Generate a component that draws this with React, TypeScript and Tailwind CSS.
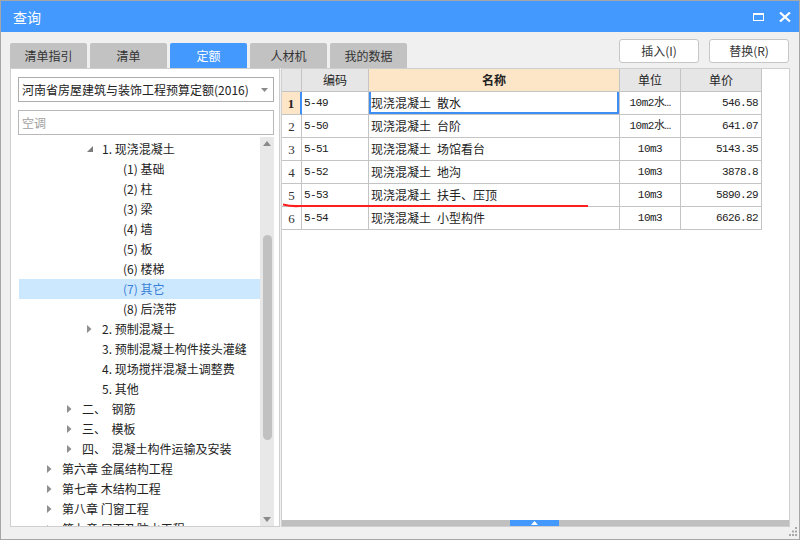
import React from "react";

type Node = { lv: 1 | 2 | 3 | 4; label: string; exp?: "open" | "closed"; sel?: boolean };

const tree: Node[] = [
  { lv: 3, exp: "open", label: "1. 现浇混凝土" },
  { lv: 4, label: "(1) 基础" },
  { lv: 4, label: "(2) 柱" },
  { lv: 4, label: "(3) 梁" },
  { lv: 4, label: "(4) 墙" },
  { lv: 4, label: "(5) 板" },
  { lv: 4, label: "(6) 楼梯" },
  { lv: 4, label: "(7) 其它", sel: true },
  { lv: 4, label: "(8) 后浇带" },
  { lv: 3, exp: "closed", label: "2. 预制混凝土" },
  { lv: 3, label: "3. 预制混凝土构件接头灌缝" },
  { lv: 3, label: "4. 现场搅拌混凝土调整费" },
  { lv: 3, label: "5. 其他" },
  { lv: 2, exp: "closed", label: "二、  钢筋" },
  { lv: 2, exp: "closed", label: "三、  模板" },
  { lv: 2, exp: "closed", label: "四、  混凝土构件运输及安装" },
  { lv: 1, exp: "closed", label: "第六章 金属结构工程" },
  { lv: 1, exp: "closed", label: "第七章 木结构工程" },
  { lv: 1, exp: "closed", label: "第八章 门窗工程" },
  { lv: 1, exp: "closed", label: "第九章 屋面及防水工程" },
];

const indent = { 1: "pl-[28px]", 2: "pl-[48px]", 3: "pl-[68px]", 4: "pl-[89px]" };

const rows = [
  { code: "5-49", a: "现浇混凝土", b: "散水", unit: "10m2水…", price: "546.58" },
  { code: "5-50", a: "现浇混凝土", b: "台阶", unit: "10m2水…", price: "641.07" },
  { code: "5-51", a: "现浇混凝土", b: "场馆看台", unit: "10m3", price: "5143.35" },
  { code: "5-52", a: "现浇混凝土", b: "地沟", unit: "10m3", price: "3878.8" },
  { code: "5-53", a: "现浇混凝土", b: "扶手、压顶", unit: "10m3", price: "5890.29" },
  { code: "5-54", a: "现浇混凝土", b: "小型构件", unit: "10m3", price: "6626.82" },
];

const tabs = ["清单指引", "清单", "定额", "人材机", "我的数据"];

function Arrow({ exp }: { exp?: "open" | "closed" }) {
  if (exp === "open")
    return (
      <svg width="6" height="6" className="mb-[1px]">
        <polygon points="6,0 6,6 0,6" fill="#7c7c7c" />
      </svg>
    );
  if (exp === "closed")
    return (
      <svg width="5" height="8">
        <polygon points="0,0 4.5,4 0,8" fill="#8f8f8f" />
      </svg>
    );
  return null;
}

export default function App() {
  return (
    <div className="w-[800px] h-[540px] border border-[#a6a6a6] bg-[#f0f0f0] flex flex-col font-['Noto_Sans_CJK_SC',sans-serif] text-[12px] text-[#222] overflow-hidden">
      {/* title bar */}
      <div className="h-[31px] shrink-0 bg-[#4499ff] flex items-center pl-[12px] pr-[8px] text-white">
        <span className="text-[14px] leading-none">查询</span>
        <div className="ml-auto flex items-center gap-[15px]">
          <div className="w-[11px] h-[8px] border-white border-[1.5px] border-t-[2.5px]" />
          <svg width="12" height="10" viewBox="0 0 12 10">
            <path d="M1 0.5 L11 9.5 M11 0.5 L1 9.5" stroke="white" strokeWidth="2.2" />
          </svg>
        </div>
      </div>

      <div className="relative flex-1 min-h-0 flex flex-col px-[9px] pb-[12px]">
        {/* tabs + buttons */}
        <div className="h-[36px] shrink-0 flex items-end">
          <div className="flex gap-[3px]">
            {tabs.map((t) => (
              <div
                key={t}
                className={
                  t === "定额"
                    ? "w-[77px] h-[25px] rounded-t-[2px] bg-[#4499ff] text-white flex items-center justify-center leading-none"
                    : "w-[77px] h-[25px] rounded-t-[2px] bg-[#c2c2c2] text-[#333] flex items-center justify-center leading-none"
                }
              >
                {t}
              </div>
            ))}
          </div>
          <div className="ml-auto flex gap-[10px] mb-[5px] mr-[1px]">
            <button className="w-[80px] h-[24px] border border-[#c6c6c6] rounded-[3px] bg-white text-[#333] leading-none">
              插入(I)
            </button>
            <button className="w-[80px] h-[24px] border border-[#c6c6c6] rounded-[3px] bg-white text-[#333] leading-none">
              替换(R)
            </button>
          </div>
        </div>

        {/* main */}
        <div className="flex-1 flex gap-[1px] min-h-0">
          {/* left panel */}
          <div className="w-[270px] bg-white border border-[#cfcfcf] flex flex-col pl-[7px] pr-[5px] pt-[8px] min-h-0">
            <div className="h-[25px] shrink-0 border border-[#acacac] flex items-center pl-[3px] pr-[5px]">
              <span className="leading-none">河南省房屋建筑与装饰工程预算定额(2016)</span>
              <svg width="7" height="4" className="ml-auto">
                <polygon points="0,0 7,0 3.5,4" fill="#8a8a8a" />
              </svg>
            </div>
            <div className="h-[25px] shrink-0 border border-[#b8b8b8] mt-[8px] flex items-center pl-[3px] text-[#a0a0a0] leading-none">
              空调
            </div>
            <div className="flex-1 flex mt-[2px] min-h-0">
              <div className="flex-1 overflow-hidden pt-[2px] pl-[1px]">
                {tree.map((n) => (
                  <div
                    key={n.label}
                    className={`h-[20px] flex items-center ${indent[n.lv]} ${n.sel ? "bg-[#cce8ff] text-[#3a7fd6]" : ""}`}
                  >
                    <span className="w-[15px] flex items-center">
                      <Arrow exp={n.exp} />
                    </span>
                    <span className="leading-[20px] whitespace-pre">{n.label}</span>
                  </div>
                ))}
              </div>
              <div className="w-[14px] bg-[#e8e8e8] flex flex-col items-center pt-[4px] pb-[4px]">
                <svg width="8" height="5">
                  <polygon points="0,5 8,5 4,0" fill="#8a8a8a" />
                </svg>
                <div className="w-[9px] h-[205px] rounded-full bg-[#c1c1c1] mt-[89px]" />
                <svg width="8" height="5" className="mt-auto">
                  <polygon points="0,0 8,0 4,5" fill="#8a8a8a" />
                </svg>
              </div>
            </div>
          </div>

          {/* right panel */}
          <div className="relative flex-1 bg-white border border-[#cfcfcf] flex flex-col min-h-0">
            <div className="grid grid-cols-[20px_67px_251px_61px_81px] w-[480px]">
              <div className="h-[23px] bg-[#e6e6e6] border-r border-b border-[#c4c4c4]" />
              <div className="h-[23px] bg-[#e6e6e6] border-r border-b border-[#c4c4c4] flex items-center justify-center leading-none">编码</div>
              <div className="h-[23px] bg-[#fde6c8] border-r border-b border-[#c4c4c4] flex items-center justify-center leading-none font-bold">名称</div>
              <div className="h-[23px] bg-[#e6e6e6] border-r border-b border-[#c4c4c4] flex items-center justify-center leading-none">单位</div>
              <div className="h-[23px] bg-[#e6e6e6] border-r border-b border-[#c4c4c4] flex items-center justify-center leading-none">单价</div>
              {rows.map((r, i) => (
                <React.Fragment key={r.code}>
                  <div
                    className={
                      i === 0
                        ? "h-[23px] bg-[#fde6c8] border-r-2 border-r-[#3d8ef5] border-b border-b-[#c4c4c4] flex items-center justify-center font-['Liberation_Serif',serif] font-bold text-[13px] leading-none"
                        : "h-[23px] border-r border-b border-[#c4c4c4] flex items-center justify-center font-['Liberation_Serif',serif] text-[13px] text-[#333] leading-none"
                    }
                  >
                    {i + 1}
                  </div>
                  <div className="h-[23px] border-r border-b border-[#c4c4c4] flex items-center pl-[2px] font-['Liberation_Mono',monospace] text-[11px] tracking-[-0.6px] leading-none">
                    {r.code}
                  </div>
                  <div
                    className={
                      i === 0
                        ? "h-[23px] border-r border-b border-[#c4c4c4] flex items-center pl-[2px] leading-none shadow-[inset_2px_0_0_#3d8ef5,inset_-2px_0_0_#3d8ef5,inset_0_-2px_0_#3d8ef5]"
                        : "h-[23px] border-r border-b border-[#c4c4c4] flex items-center pl-[2px] leading-none"
                    }
                  >
                    <span>{r.a}</span>
                    <span className="ml-[6px]">{r.b}</span>
                  </div>
                  <div className="h-[23px] border-r border-b border-[#c4c4c4] flex items-center justify-center font-['Liberation_Mono','Noto_Sans_CJK_SC',monospace] text-[11px] tracking-[-0.5px] leading-none">
                    {r.unit}
                  </div>
                  <div className="h-[23px] border-r border-b border-[#c4c4c4] flex items-center justify-end pr-[3px] font-['Liberation_Mono',monospace] text-[11px] tracking-[-0.6px] leading-none">
                    {r.price}
                  </div>
                </React.Fragment>
              ))}
            </div>

            {/* hand-drawn red mark */}
            <svg className="absolute left-0 top-[133px]" width="320" height="8">
              <path d="M1 2.5 Q9 4.6 18 4 L306 4" stroke="#ff1e1e" strokeWidth="2.2" fill="none" />
            </svg>

            <div className="mt-auto h-[6px] shrink-0 bg-[#c0c0c0] flex">
              <div className="ml-[228px] w-[49px] h-[6px] bg-[#4499ff] flex items-center justify-center">
                <svg width="7" height="4">
                  <polygon points="0,4 7,4 3.5,0" fill="white" />
                </svg>
              </div>
            </div>
          </div>
        </div>

        {/* resize grip */}
        <svg className="absolute right-[1px] bottom-[2px]" width="10" height="10">
          <rect x="7" y="0" width="2" height="2" fill="#a8a8a8" />
          <rect x="4" y="3.5" width="2" height="2" fill="#a8a8a8" />
          <rect x="7" y="3.5" width="2" height="2" fill="#a8a8a8" />
          <rect x="1" y="7" width="2" height="2" fill="#a8a8a8" />
          <rect x="4" y="7" width="2" height="2" fill="#a8a8a8" />
          <rect x="7" y="7" width="2" height="2" fill="#a8a8a8" />
        </svg>
      </div>
    </div>
  );
}
